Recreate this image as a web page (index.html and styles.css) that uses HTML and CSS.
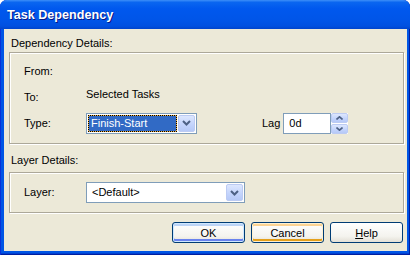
FILE: index.html
```html
<!DOCTYPE html>
<html lang="en">
<head>
    <meta charset="UTF-8">
    <title>Task Dependency</title>
    <link rel="stylesheet" href="styles.css">
</head>
<body>
    <div class="window">
        <div class="titlebar"><span class="title">Task Dependency</span></div>

        <div class="client">
            <!-- Dependency details -->
            <div class="section-label">Dependency Details:</div>
            <div class="groupbox deps">
                <div class="row">
                    <span class="label">From:</span>
                </div>
                <div class="row">
                    <span class="label">To:</span>
                    <span class="value">Selected Tasks</span>
                </div>
                <div class="row">
                    <span class="label">Type:</span>
                    <div class="combo combo-type">
                        <span class="combo-text selected">Finish-Start</span>
                        <span class="combo-btn">
                            <svg width="9" height="6" viewBox="0 0 9 6"><polyline points="1,1 4.5,4.5 8,1" fill="none" stroke="#4d6185" stroke-width="2"/></svg>
                        </span>
                    </div>
                    <span class="lag-label">Lag</span>
                    <div class="lag-input">0d</div>
                    <div class="spin">
                        <span class="spin-btn">
                            <svg width="7" height="4" viewBox="0 0 7 4"><polyline points="0.5,3.5 3.5,0.8 6.5,3.5" fill="none" stroke="#4d6185" stroke-width="1.6"/></svg>
                        </span>
                        <span class="spin-btn">
                            <svg width="7" height="4" viewBox="0 0 7 4"><polyline points="0.5,0.5 3.5,3.2 6.5,0.5" fill="none" stroke="#4d6185" stroke-width="1.6"/></svg>
                        </span>
                    </div>
                </div>
            </div>

            <!-- Layer details -->
            <div class="section-label layer-label">Layer Details:</div>
            <div class="groupbox layers">
                <div class="row">
                    <span class="label">Layer:</span>
                    <div class="combo combo-layer">
                        <span class="combo-text">&lt;Default&gt;</span>
                        <span class="combo-btn">
                            <svg width="9" height="6" viewBox="0 0 9 6"><polyline points="1,1 4.5,4.5 8,1" fill="none" stroke="#4d6185" stroke-width="2"/></svg>
                        </span>
                    </div>
                </div>
            </div>

            <div class="buttons">
                <button class="btn btn-default">OK</button>
                <button class="btn btn-focus">Cancel</button>
                <button class="btn"><u>H</u>elp</button>
            </div>
        </div>
    </div>
</body>
</html>
```

FILE: styles.css
```css
body {
    margin: 0;
    background: #ffffff;
    font-family: "Liberation Sans", Arial, sans-serif;
    font-size: 11px;
    line-height: 13px;
    color: #000;
}

.window {
    width: 410px;
    height: 255px;
    box-sizing: border-box;
    display: flex;
    flex-direction: column;
    background: #0055e5;
    border-radius: 7px 7px 0 0;
    box-shadow: inset 1px 0 #0831d9, inset -1px 0 #001ea0, inset 0 -1px #001ea0, inset 0 -2px #0040d0;
}

/* Title bar */
.titlebar {
    height: 29px;
    flex: none;
    display: flex;
    align-items: center;
    padding-left: 7px;
    border-radius: 7px 7px 0 0;
    background: linear-gradient(#3d8ff8 0%, #0a66f0 8%, #0058ee 30%, #0055e8 70%, #0050e0 90%, #0044cc 100%);
}

.title {
    color: #fff;
    font-family: "Liberation Sans", Arial, sans-serif;
    font-weight: bold;
    font-size: 12.6px;
    text-shadow: 1px 1px #0a1883;
    margin-top: 1px;
}

/* Client area */
.client {
    flex: 1;
    margin: 0 3px 4px 4px;
    padding: 8px 3px 0 5px;
    background: #ece9d8;
    display: flex;
    flex-direction: column;
}

.section-label {
    padding-left: 2px;
    margin-bottom: 2px;
}

.layer-label {
    margin-top: 10px;
    margin-bottom: 5px;
}

.groupbox {
    border: 1px solid #aca899;
    box-shadow: inset 1px 1px #fff, 1px 1px #fff;
    padding-left: 14px;
}

.deps {
    padding-top: 5px;
    padding-bottom: 7px;
}

.layers {
    padding-top: 9px;
    padding-bottom: 9px;
}

.row {
    display: flex;
    align-items: center;
    height: 26px;
}

.layers .row {
    height: 21px;
}

.label {
    width: 62px;
    flex: none;
}

.value {
    margin-bottom: 6px;
}

/* Combo boxes */
.combo {
    height: 21px;
    box-sizing: border-box;
    border: 1px solid #7f9db9;
    background: #fff;
    display: flex;
    padding: 1px;
}

.combo-type {
    width: 111px;
}

.combo-layer {
    width: 159px;
}

.combo-text {
    flex: 1;
    padding-left: 4px;
    display: flex;
    align-items: center;
}

.combo-text.selected {
    margin-right: 1px;
    padding-left: 2px;
    background: #316ac5;
    color: #fff;
    border: 1px solid #f0b040;
    outline: 1px dotted #000;
    outline-offset: -1px;
}

.combo-btn {
    width: 15px;
    flex: none;
    display: flex;
    align-items: center;
    justify-content: center;
    border: 1px solid #bccbf3;
    border-radius: 2px;
    background: linear-gradient(#dde7fe, #c2d3fc 60%, #b6c9f7);
}

/* Lag field */
.lag-label {
    margin-left: 65px;
    margin-right: 3px;
}

.lag-input {
    width: 48px;
    height: 21px;
    box-sizing: border-box;
    border: 1px solid #7f9db9;
    background: #fff;
    padding-left: 5px;
    display: flex;
    align-items: center;
}

.spin {
    width: 17px;
    height: 21px;
    display: flex;
    flex-direction: column;
    gap: 1px;
    background: #fff;
}

.spin-btn {
    flex: 1;
    display: flex;
    align-items: center;
    justify-content: center;
    border: 1px solid #bccbf3;
    border-radius: 2px;
    background: linear-gradient(#dde7fe, #c2d3fc 60%, #b6c9f7);
}

/* Dialog buttons */
.buttons {
    display: flex;
    justify-content: flex-end;
    gap: 6px;
    margin-top: 9px;
    padding-right: 1px;
}

.btn {
    width: 73px;
    height: 21px;
    padding: 0;
    font-family: "Liberation Sans", Arial, sans-serif;
    font-size: 11px;
    color: #000;
    border: 1px solid #003c74;
    border-radius: 3px;
    background: linear-gradient(#ffffff, #f4f3ee 70%, #e3e0d6);
}

.btn-default {
    box-shadow: inset 0 0 0 1px #cee7ff, inset 0 -2px 0 1px #6982ee, inset 0 2px 0 1px #bcd4f6;
}

.btn-focus {
    box-shadow: inset 0 0 0 1px #fff0cf, inset 0 -2px 0 1px #e5a01a, inset 0 2px 0 1px #fcd393;
}
```
